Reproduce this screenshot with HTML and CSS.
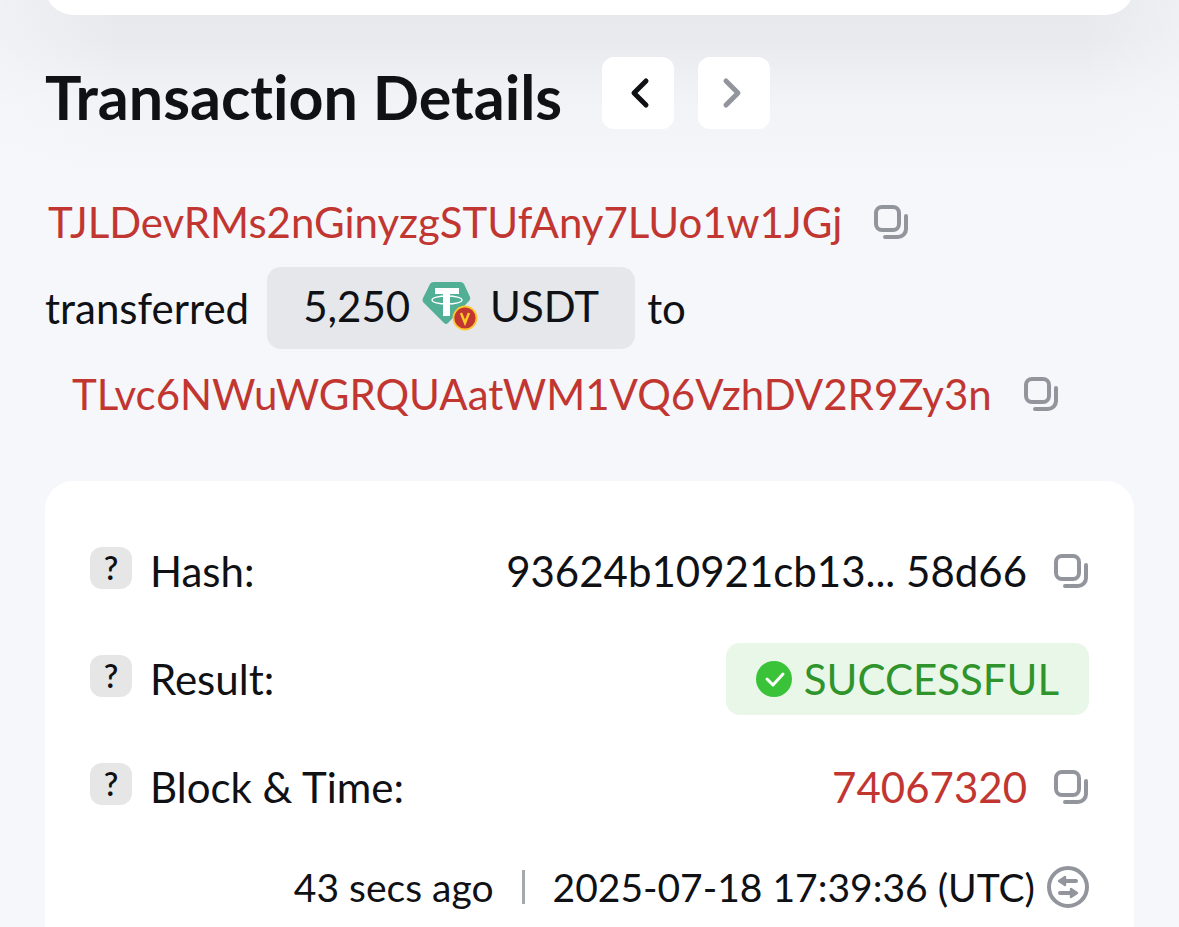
FILE: index.html
```
<!DOCTYPE html>
<html lang="en">
<head>
    <meta charset="UTF-8">
    <meta name="viewport" content="width=device-width, initial-scale=1.0">
    <title>Transaction Details</title>
    <link rel="stylesheet" href="styles.css">
</head>
<body>
    <!-- Shared icons -->
    <svg class="sprite" aria-hidden="true">
        <symbol id="copy" viewBox="0 0 36 36">
            <rect x="3" y="3" width="23" height="23" rx="6"/>
            <path d="M33 12v13a8 8 0 0 1-8 8H12"/>
        </symbol>
    </svg>

    <div class="search-panel"></div>

    <main class="page">
        <div class="title-row">
            <h1>Transaction Details</h1>
            <button type="button" class="nav-btn" aria-label="Previous transaction">
                <svg viewBox="0 0 72 72"><path d="M44 24 32 36 44 48"/></svg>
            </button>
            <button type="button" class="nav-btn" aria-label="Next transaction" disabled>
                <svg viewBox="0 0 72 72"><path d="M28 24 40 36 28 48"/></svg>
            </button>
        </div>

        <section class="summary">
            <div class="summary-row from-row">
                <a href="#" class="address">TJLDevRMs2nGinyzgSTUfAny7LUo1w1JGj</a>
                <button type="button" class="copy-btn" aria-label="Copy sender"><svg><use href="#copy"/></svg></button>
            </div>
            <div class="summary-row transfer-row">
                <span>transferred</span>
                <span class="amount">
                    <span>5,250</span>
                    <svg class="token" viewBox="0 0 56 50">
                        <path d="M12 1h26q3 0 4 2l6 13q1 2-1 4L26 42q-2 2-4 0L1 21q-1-2 0-4L8 3q1-2 4-2z" fill="#50af95"/>
                        <path d="M13 7h24v6H28v22h-7V13h-8z" fill="#fff"/>
                        <ellipse cx="25" cy="19" rx="15" ry="4" fill="none" stroke="#fff" stroke-width="1.3"/>
                        <circle cx="43" cy="37" r="11.5" fill="#c23631" stroke="#fdc72e" stroke-width="1.8"/>
                        <path d="M39 32 43 42 47 32" fill="none" stroke="#ffc928" stroke-width="2.4"/>
                    </svg>
                    <span>USDT</span>
                </span>
                <span>to</span>
            </div>
            <div class="summary-row to-row">
                <a href="#" class="address">TLvc6NWuWGRQUAatWM1VQ6VzhDV2R9Zy3n</a>
                <button type="button" class="copy-btn" aria-label="Copy receiver"><svg><use href="#copy"/></svg></button>
            </div>
        </section>

        <section class="details">
            <div class="detail-row">
                <button type="button" class="help" aria-label="About hash">?</button>
                <span class="label">Hash:</span>
                <span>93624b10921cb13... 58d66</span>
                <button type="button" class="copy-btn" aria-label="Copy hash"><svg><use href="#copy"/></svg></button>
            </div>
            <div class="detail-row">
                <button type="button" class="help" aria-label="About result">?</button>
                <span class="label">Result:</span>
                <span class="status">
                    <svg viewBox="0 0 36 36">
                        <circle cx="18" cy="18" r="18" fill="#3ac338"/>
                        <path d="M11 18 17 24 27 13" fill="none" stroke="#fff" stroke-width="3" stroke-linecap="round" stroke-linejoin="round"/>
                    </svg>
                    SUCCESSFUL
                </span>
            </div>
            <div class="detail-row">
                <button type="button" class="help" aria-label="About block and time">?</button>
                <span class="label">Block &amp; Time:</span>
                <a href="#">74067320</a>
                <button type="button" class="copy-btn" aria-label="Copy block"><svg><use href="#copy"/></svg></button>
            </div>
            <div class="time-row">
                <span>43 secs ago</span>
                <span class="divider"></span>
                <span>2025-07-18 17:39:36 (UTC)</span>
                <button type="button" class="switch-btn" aria-label="Switch time zone">
                    <svg viewBox="0 0 42 42">
                        <circle cx="21" cy="21" r="19" fill="none" stroke="#92959c" stroke-width="4"/>
                        <path d="M16 15h13M13 27h13" fill="none" stroke="#92959c" stroke-width="4" stroke-linecap="round"/>
                        <path d="M12 15l6-4v8zM30 27l-6-4v8z" fill="#92959c" stroke="#92959c" stroke-width="2.4" stroke-linejoin="round"/>
                    </svg>
                </button>
            </div>
        </section>
    </main>
</body>
</html>
```
FILE: styles.css
```
* {
    box-sizing: border-box;
}

body {
    margin: 0;
    min-height: 100vh;
    display: flex;
    flex-direction: column;
    font-family: Lato, "Liberation Sans", sans-serif;
    font-size: 42px;
    line-height: 52px;
    font-variant-ligatures: none;
    color: #101114;
    background-color: #f5f7fb;
    background-image:
        linear-gradient(to right, rgba(245, 247, 251, 0.6), transparent 10%, transparent 92%, rgba(245, 247, 251, 0.5)),
        linear-gradient(to bottom, #e7e8ea 0, #e9eaed 40px, #f1f3f7 100px, #f5f7fb 190px);
}

a {
    color: #c23631;
    text-decoration: none;
}

button {
    padding: 0;
    border: none;
    background: none;
    font-family: inherit;
    color: inherit;
    cursor: pointer;
}

svg {
    display: block;
}

.sprite {
    display: none;
}

/* Only the lower edge of the panel shows */
.search-panel {
    height: 60px;
    margin: -45px 45px 0;
    border-radius: 28px;
    background: #fff;
}

.page {
    flex: 1;
    display: flex;
    flex-direction: column;
    padding: 42px 45px 0;
}

/* Heading */
.title-row {
    display: flex;
    align-items: center;
    gap: 24px;
}

.title-row h1 {
    margin: 8px 16px 0 0;
    font-size: 61px;
    line-height: 64px;
    font-weight: bold;
}

.nav-btn {
    width: 72px;
    height: 72px;
    border-radius: 12px;
    background: #fff;
}

.nav-btn path {
    fill: none;
    stroke: #101114;
    stroke-width: 5;
    stroke-linecap: round;
    stroke-linejoin: round;
}

.nav-btn:disabled path {
    stroke: #92959c;
}

/* Transfer summary */
.summary {
    padding: 50px 0 44px;
}

.summary-row {
    display: flex;
    align-items: center;
    height: 86px;
    gap: 31px;
}

.from-row {
    padding-left: 3px;
}

.transfer-row {
    gap: 12px;
}

.to-row {
    padding-left: 27px;
}

.amount {
    display: flex;
    align-items: center;
    gap: 12px;
    height: 82px;
    margin-left: 6px;
    padding: 0 36px 4px;
    border-radius: 14px;
    background: #e5e7eb;
}

.token {
    width: 56px;
    height: 50px;
}

.copy-btn svg {
    width: 36px;
    height: 36px;
    fill: none;
    stroke: #92959c;
    stroke-width: 4;
    stroke-linecap: round;
}

/* Details card */
.details {
    flex: 1;
    padding: 36px 45px 12px;
    border-radius: 28px 28px 0 0;
    background: #fff;
}

.detail-row {
    display: flex;
    align-items: center;
    height: 108px;
}

.detail-row .copy-btn {
    margin-left: 26px;
}

.help {
    width: 42px;
    height: 42px;
    margin: 0 18px 6px 0;
    border-radius: 12px;
    background: #e6e6e6;
    font-size: 32px;
    line-height: 42px;
    font-weight: 600;
}

.label {
    margin-right: auto;
}

.status {
    display: flex;
    align-items: center;
    gap: 12px;
    height: 72px;
    padding: 0 30px;
    border-radius: 14px;
    background: #e9f7e9;
    color: #2f942c;
}

.status svg {
    width: 36px;
    height: 36px;
}

.time-row {
    display: flex;
    align-items: center;
    justify-content: flex-end;
    padding-top: 20px;
    font-size: 39px;
}

.divider {
    width: 3px;
    height: 34px;
    margin: 0 28px;
    background: #a5a8af;
}

.switch-btn {
    margin-left: 12px;
}

.switch-btn svg {
    width: 42px;
    height: 42px;
}
```
